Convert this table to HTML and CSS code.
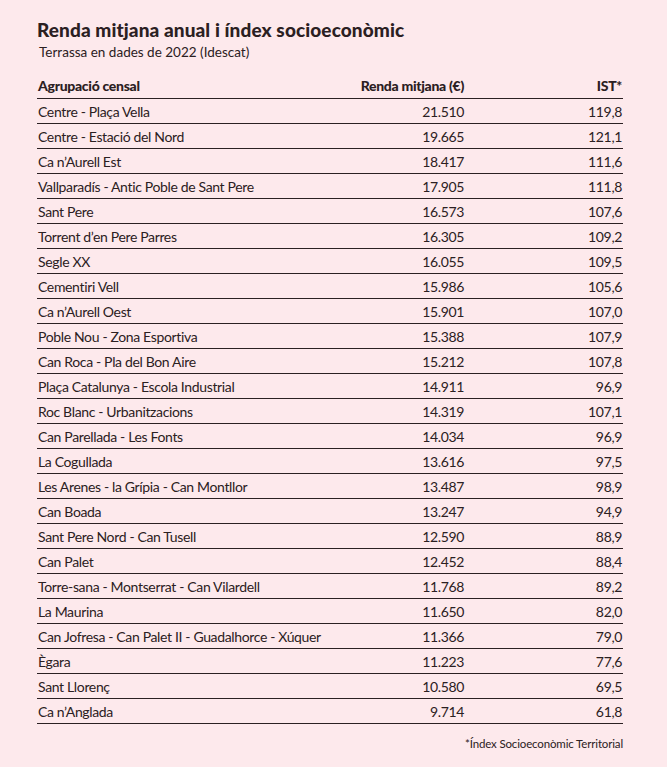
FILE: index.html
```html
<!DOCTYPE html>
<html lang="ca">
<head>
<meta charset="utf-8">
<link rel="stylesheet" href="styles.css">
</head>
<body>
<div class="page">
  <h1 class="title">Renda mitjana anual i índex socioeconòmic</h1>
  <p class="subtitle">Terrassa en dades de 2022 (Idescat)</p>
  <table class="data">
    <thead>
      <tr><th class="name">Agrupació censal</th><th class="num">Renda mitjana (€)</th><th class="num ist">IST*</th></tr>
    </thead>
    <tbody>
      <tr><td>Centre - Plaça Vella</td><td class="num">21.510</td><td class="num ist">119,8</td></tr>
      <tr><td>Centre - Estació del Nord</td><td class="num">19.665</td><td class="num ist">121,1</td></tr>
      <tr><td>Ca n’Aurell Est</td><td class="num">18.417</td><td class="num ist">111,6</td></tr>
      <tr><td>Vallparadís - Antic Poble de Sant Pere</td><td class="num">17.905</td><td class="num ist">111,8</td></tr>
      <tr><td>Sant Pere</td><td class="num">16.573</td><td class="num ist">107,6</td></tr>
      <tr><td>Torrent d’en Pere Parres</td><td class="num">16.305</td><td class="num ist">109,2</td></tr>
      <tr><td>Segle XX</td><td class="num">16.055</td><td class="num ist">109,5</td></tr>
      <tr><td>Cementiri Vell</td><td class="num">15.986</td><td class="num ist">105,6</td></tr>
      <tr><td>Ca n’Aurell Oest</td><td class="num">15.901</td><td class="num ist">107,0</td></tr>
      <tr><td>Poble Nou - Zona Esportiva</td><td class="num">15.388</td><td class="num ist">107,9</td></tr>
      <tr><td>Can Roca - Pla del Bon Aire</td><td class="num">15.212</td><td class="num ist">107,8</td></tr>
      <tr><td>Plaça Catalunya - Escola Industrial</td><td class="num">14.911</td><td class="num ist">96,9</td></tr>
      <tr><td>Roc Blanc - Urbanitzacions</td><td class="num">14.319</td><td class="num ist">107,1</td></tr>
      <tr><td>Can Parellada - Les Fonts</td><td class="num">14.034</td><td class="num ist">96,9</td></tr>
      <tr><td>La Cogullada</td><td class="num">13.616</td><td class="num ist">97,5</td></tr>
      <tr><td>Les Arenes - la Grípia - Can Montllor</td><td class="num">13.487</td><td class="num ist">98,9</td></tr>
      <tr><td>Can Boada</td><td class="num">13.247</td><td class="num ist">94,9</td></tr>
      <tr><td>Sant Pere Nord - Can Tusell</td><td class="num">12.590</td><td class="num ist">88,9</td></tr>
      <tr><td>Can Palet</td><td class="num">12.452</td><td class="num ist">88,4</td></tr>
      <tr><td>Torre-sana - Montserrat - Can Vilardell</td><td class="num">11.768</td><td class="num ist">89,2</td></tr>
      <tr><td>La Maurina</td><td class="num">11.650</td><td class="num ist">82,0</td></tr>
      <tr><td>Can Jofresa - Can Palet II - Guadalhorce - Xúquer</td><td class="num">11.366</td><td class="num ist">79,0</td></tr>
      <tr><td>Ègara</td><td class="num">11.223</td><td class="num ist">77,6</td></tr>
      <tr><td>Sant Llorenç</td><td class="num">10.580</td><td class="num ist">69,5</td></tr>
      <tr><td>Ca n’Anglada</td><td class="num">9.714</td><td class="num ist">61,8</td></tr>
    </tbody>
  </table>
  <p class="note">*Índex Socioeconòmic Territorial</p>
</div>
</body>
</html>
```
FILE: styles.css
```css
html, body {
  margin: 0;
  padding: 0;
  background: #fde9ec;
}
body {
  font-family: Lato, "Noto Sans", sans-serif;
  color: #2b2022;
}
.page {
  width: 586px;
  padding: 19px 0 0 37px;
}
.title {
  margin: 0;
  font-size: 19px;
  font-weight: 900;
  letter-spacing: 0.1px;
  line-height: 22px;
}
.subtitle {
  margin: 3px 0 0 2px;
  font-size: 13.5px;
  letter-spacing: 0;
  line-height: 17px;
}
.data {
  width: 586px;
  margin-top: 14px;
  border-collapse: collapse;
  font-size: 14px;
  letter-spacing: -0.35px;
}
.data th {
  font-weight: 900;
  text-align: left;
  height: 20px;
  padding: 0 1px 3px;
  vertical-align: middle;
  border-bottom: 1.5px solid #2b2022;
  font-size: 14px;
  letter-spacing: -0.3px;
}
.data td {
  height: 24px;
  padding: 0 1px;
  border-bottom: 1px solid #2b2022;
  vertical-align: middle;
}
.data .num {
  text-align: right;
}
.data .ist {
  width: 156px;
}
.note {
  margin: 13px 0 0;
  text-align: right;
  font-size: 11.5px;
  letter-spacing: -0.15px;
}
```
